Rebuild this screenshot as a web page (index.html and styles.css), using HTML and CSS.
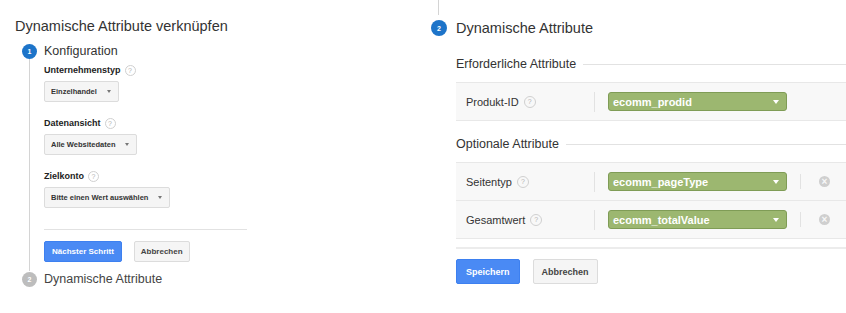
FILE: index.html
```html
<!DOCTYPE html>
<html lang="de">
<head>
<meta charset="utf-8">
<title>Dynamische Attribute verknüpfen</title>
<link rel="stylesheet" href="styles.css">
</head>
<body>
<div class="page">

  <!-- left: wizard, step 1 open -->
  <section class="panel panel-left">
    <h1 class="title">Dynamische Attribute verknüpfen</h1>

    <div class="step-head">
      <span class="step-num step-num-active">1</span>
      <span class="step-label">Konfiguration</span>
    </div>
    <div class="step-body">
      <div class="field">
        <div class="field-label">Unternehmenstyp <span class="help">?</span></div>
        <div class="select">Einzelhandel<span class="caret"></span></div>
      </div>
      <div class="field">
        <div class="field-label">Datenansicht <span class="help">?</span></div>
        <div class="select">Alle Websitedaten<span class="caret"></span></div>
      </div>
      <div class="field">
        <div class="field-label">Zielkonto <span class="help">?</span></div>
        <div class="select">Bitte einen Wert auswählen<span class="caret"></span></div>
      </div>
      <div class="divider"></div>
      <div class="actions">
        <a href="#" class="btn btn-primary">Nächster Schritt</a>
        <a href="#" class="btn">Abbrechen</a>
      </div>
    </div>

    <div class="step-head">
      <span class="step-num step-num-todo">2</span>
      <span class="step-label step-label-todo">Dynamische Attribute</span>
    </div>
  </section>

  <!-- right: step 2 open -->
  <section class="panel panel-right">
    <div class="connector"></div>
    <div class="step-head step-head-big">
      <span class="step-num step-num-active step-num-big">2</span>
      <span class="step-label step-label-big">Dynamische Attribute</span>
    </div>

    <div class="step-content">
      <div class="group-title">Erforderliche Attribute</div>
      <div class="attr-table">
        <div class="attr-row">
          <div class="attr-name">Produkt-ID <span class="help">?</span></div>
          <div class="attr-select">ecomm_prodid<span class="caret caret-white"></span></div>
        </div>
      </div>

      <div class="group-title group-title-opt">Optionale Attribute</div>
      <div class="attr-table">
        <div class="attr-row">
          <div class="attr-name">Seitentyp <span class="help">?</span></div>
          <div class="attr-select">ecomm_pageType<span class="caret caret-white"></span></div>
          <div class="attr-remove"><span class="remove">&times;</span></div>
        </div>
        <div class="attr-row">
          <div class="attr-name">Gesamtwert <span class="help">?</span></div>
          <div class="attr-select">ecomm_totalValue<span class="caret caret-white"></span></div>
          <div class="attr-remove"><span class="remove">&times;</span></div>
        </div>
      </div>
      <div class="table-end"></div>

      <div class="actions actions-big">
        <a href="#" class="btn btn-primary btn-big">Speichern</a>
        <a href="#" class="btn btn-big">Abbrechen</a>
      </div>
    </div>
  </section>

</div>
</body>
</html>
```

FILE: styles.css
```css
body {
  margin: 0;
  background: #fff;
  color: #333;
  font-family: "Liberation Sans", Arial, sans-serif;
}
.page {
  display: flex;
  width: 846px;
  height: 313px;
  overflow: hidden;
}
.panel-left {
  width: 410px;
  padding: 17px 0 0 15px;
}
.panel-right {
  flex: 1;
  padding-left: 6px;
}

/* headings */
.title {
  margin: 0;
  font-size: 14.5px;
  font-weight: normal;
  line-height: 18px;
  color: #333;
}

/* steps */
.step-head {
  display: flex;
  align-items: center;
  height: 16px;
  margin-top: 8px;
}
.step-num {
  display: flex;
  align-items: center;
  justify-content: center;
  width: 15px;
  height: 15px;
  margin-left: 7px;
  margin-right: 7px;
  border-radius: 50%;
  color: #fff;
  font-size: 7px;
  font-weight: bold;
}
.step-num-active {
  background: #1d74c9;
}
.step-num-todo {
  background: #bdbdbd;
}
.step-label {
  font-size: 12.5px;
  line-height: 16px;
  color: #333;
}
.step-label-todo {
  color: #444;
}
.step-body {
  margin-left: 14px;
  padding: 5px 0 9px 14px;
  border-left: 1px solid #d4d4d4;
}
.step-body + .step-head {
  margin-top: 0;
}

/* form fields */
.field {
  margin-bottom: 15px;
}
.field-label {
  display: flex;
  align-items: center;
  height: 12px;
  margin-bottom: 4px;
  font-size: 9px;
  font-weight: bold;
  color: #222;
}
.help {
  display: inline-flex;
  align-items: center;
  justify-content: center;
  width: 9px;
  height: 9px;
  margin-left: 4px;
  border: 1px solid #d0d0d0;
  border-radius: 50%;
  color: #b4b4b4;
  font-size: 7px;
  font-weight: normal;
}
.select {
  display: inline-flex;
  align-items: center;
  height: 19px;
  padding: 0 7px 0 6px;
  border: 1px solid #dcdcdc;
  border-radius: 2px;
  background: #f5f5f5;
  color: #333;
  font-size: 7.5px;
  font-weight: bold;
}
.caret {
  width: 0;
  height: 0;
  margin-left: 10px;
  border-top: 3px solid #777;
  border-left: 2.5px solid transparent;
  border-right: 2.5px solid transparent;
}
.caret-white {
  margin-left: auto;
  border-top: 4px solid #fff;
  border-left: 3.5px solid transparent;
  border-right: 3.5px solid transparent;
}
.divider {
  width: 203px;
  height: 1px;
  margin-top: 21px;
  background: #e2e2e2;
}

/* buttons */
.actions {
  display: flex;
  gap: 12px;
  margin-top: 11px;
}
.btn {
  display: flex;
  align-items: center;
  height: 19px;
  padding: 0 6px;
  border: 1px solid #dcdcdc;
  border-radius: 2px;
  background: #f5f5f5;
  color: #444;
  font-size: 8px;
  font-weight: bold;
  text-decoration: none;
}
.btn-primary {
  padding: 0 7px;
  border-color: #3d80f0;
  background: #4a8af4;
  color: #fff;
}
.btn-big {
  height: 23px;
  padding: 0 8px;
  font-size: 9px;
}
.btn-primary.btn-big {
  padding: 0 9px;
}
.actions-big {
  gap: 13px;
  margin-top: 10px;
}

/* right side */
.connector {
  width: 1px;
  height: 15px;
  margin-left: 7px;
  background: #d4d4d4;
}
.step-head-big {
  margin-top: 5px;
}
.step-num-big {
  width: 16px;
  height: 16px;
  margin-left: 0;
  margin-right: 9px;
}
.step-label-big {
  font-size: 14.5px;
}
.step-content {
  margin-left: 25px;
}
.group-title {
  display: flex;
  align-items: center;
  gap: 7px;
  margin-top: 20px;
  margin-bottom: 10px;
  font-size: 12.5px;
  line-height: 16px;
  color: #333;
}
.group-title::after {
  content: "";
  flex: 1;
  height: 1px;
  background: #e2e2e2;
}
.group-title-opt {
  margin-top: 15px;
}
.attr-table {
  border-top: 1px solid #e8e8e8;
}
.attr-row {
  display: flex;
  align-items: center;
  height: 37px;
  border-bottom: 1px solid #e8e8e8;
  background: #f8f8f8;
  font-size: 11px;
}
.attr-name {
  display: flex;
  align-items: center;
  width: 128px;
  height: 20px;
  padding-left: 10px;
  border-right: 1px solid #e2e2e2;
  color: #333;
}
.attr-name .help {
  width: 10px;
  height: 10px;
  margin-left: 5px;
}
.attr-select {
  display: flex;
  align-items: center;
  width: 166px;
  height: 17px;
  margin-left: 13px;
  padding: 0 7px 0 4px;
  border: 1px solid #7f9c56;
  border-radius: 3px;
  background: #9cb770;
  color: #fff;
  font-weight: bold;
}
.attr-remove {
  display: flex;
  align-items: center;
  height: 15px;
  margin-left: 13px;
  padding-left: 18px;
  border-left: 1px solid #e2e2e2;
}
.remove {
  display: flex;
  align-items: center;
  justify-content: center;
  width: 11px;
  height: 11px;
  border-radius: 50%;
  background: #cfcfcf;
  color: #f8f8f8;
  font-size: 10px;
  font-weight: bold;
  line-height: 1;
}
.table-end {
  height: 2px;
  margin-top: 8px;
  background: #ececec;
}
```
